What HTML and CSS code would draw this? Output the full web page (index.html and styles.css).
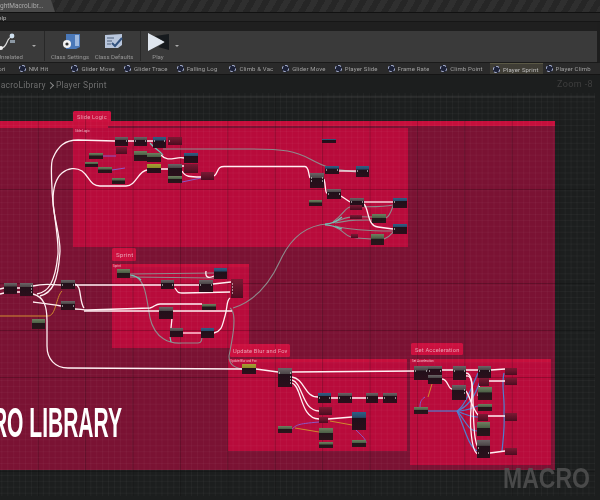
FILE: index.html
```html
<!DOCTYPE html>
<html lang="en">
<head>
<meta charset="utf-8">
<title>Player Sprint</title>
<link rel="stylesheet" href="styles.css">
</head>
<body>
<div class="app">
  <header class="titlebar"><div class="doctab">ghtMacroLibr...</div></header>
  <nav class="menubar"><span class="menu-item">Help</span></nav>
  <div class="toolbar">
    <div class="tool tool-first">
      <svg class="tool-icon" viewBox="0 0 24 20"><path class="ic-wire" d="M3 16C10 16 8 5 14 5"/><circle class="ic-dot" cx="14" cy="4" r="2.4"/><rect class="ic-box" x="12" y="8" width="5" height="3"/><circle class="ic-dot2" cx="3" cy="16" r="2"/></svg>
      <span class="tool-label">Unrelated</span>
    </div>
    <span class="caret caret-a"></span>
    <span class="sep"></span>
    <div class="tool">
      <svg class="tool-icon" viewBox="0 0 24 20"><path class="ic-blue" d="M8 2H22V15L18 17H8Z"/><path class="ic-light" d="M17 3H21V14H17Z"/><circle class="ic-gear" cx="9" cy="12" r="4"/><circle class="ic-hole" cx="9" cy="12" r="1.6"/></svg>
      <span class="tool-label">Class Settings</span>
    </div>
    <div class="tool">
      <svg class="tool-icon" viewBox="0 0 24 20"><path class="ic-pale" d="M3 3L20 2V13L16 16H3Z"/><path class="ic-check" d="M10 11L13 14L20 6"/><path class="ic-lines" d="M5 6H12M5 9H10M5 12H9"/></svg>
      <span class="tool-label">Class Defaults</span>
    </div>
    <span class="sep sep-b"></span>
    <div class="tool tool-play">
      <svg class="tool-icon" viewBox="0 0 24 20"><path class="ic-white" d="M2 1L19 10L2 19Z"/><path class="ic-dark" d="M19 10L9 4L23 2V18L12 15Z"/></svg>
      <span class="tool-label">Play</span>
    </div>
    <span class="caret caret-b"></span>
  </div>
  <div class="tabs">
    <div class="tab"><span class="tab-text">Anim Graph Cori</span></div>
    <div class="tab"><span class="gear"></span><span class="tab-text">NM Hit</span></div>
    <div class="tab"><span class="gear"></span><span class="tab-text">Glider Move</span></div>
    <div class="tab"><span class="gear"></span><span class="tab-text">Glider Trace</span></div>
    <div class="tab"><span class="gear"></span><span class="tab-text">Falling Log</span></div>
    <div class="tab"><span class="gear"></span><span class="tab-text">Climb &amp; Vac</span></div>
    <div class="tab"><span class="gear"></span><span class="tab-text">Glider Move</span></div>
    <div class="tab"><span class="gear"></span><span class="tab-text">Player Slide</span></div>
    <div class="tab"><span class="gear"></span><span class="tab-text">Frame Rate</span></div>
    <div class="tab"><span class="gear"></span><span class="tab-text">Climb Point</span></div>
    <div class="tab tab-active"><span class="gear"></span><span class="tab-text">Player Sprint</span></div>
    <div class="tab"><span class="gear"></span><span class="tab-text">Player Climb</span></div>
  </div>
  <main class="graph">
    <svg class="graph-svg" viewBox="0 74 600 426">
      <defs>
        <pattern id="minor" patternUnits="userSpaceOnUse" x="2.3" y="0.5" width="5.93" height="5.93"><path class="grid-minor" d="M5.93 0V5.93M0 5.93H5.93"/></pattern>
        <pattern id="major" patternUnits="userSpaceOnUse" x="37.7" y="47" width="47.4" height="47"><path class="grid-major" d="M0 0V47M0 0H47.4"/></pattern>
        <linearGradient id="nk" x1="0" y1="0" x2="0" y2="1"><stop offset="0" stop-color="#6b6567"/><stop offset=".3" stop-color="#4d4648"/><stop offset=".34" stop-color="#22101a"/><stop offset="1" stop-color="#2b0f1b"/></linearGradient>
        <linearGradient id="nb" x1="0" y1="0" x2="0" y2="1"><stop offset="0" stop-color="#2f5f86"/><stop offset=".3" stop-color="#294a68"/><stop offset=".34" stop-color="#20101a"/><stop offset="1" stop-color="#2a0f1b"/></linearGradient>
        <linearGradient id="ng" x1="0" y1="0" x2="0" y2="1"><stop offset="0" stop-color="#6f8060"/><stop offset=".4" stop-color="#4c5f46"/><stop offset=".44" stop-color="#22151a"/><stop offset="1" stop-color="#2b151b"/></linearGradient>
        <linearGradient id="ny" x1="0" y1="0" x2="0" y2="1"><stop offset="0" stop-color="#a8a032"/><stop offset=".4" stop-color="#8e8c2c"/><stop offset=".44" stop-color="#22101a"/><stop offset="1" stop-color="#2b0f1b"/></linearGradient>
        <linearGradient id="nr" x1="0" y1="0" x2="0" y2="1"><stop offset="0" stop-color="#7b1a34"/><stop offset="1" stop-color="#4c0c20"/></linearGradient>
      </defs>

      <rect class="bg" x="0" y="74" width="600" height="426"/>
      <rect class="outer" x="0" y="120" width="555" height="349"/>
      <rect class="outer-top" x="0" y="120" width="555" height="5"/>
      <rect class="inner" x="73" y="127" width="335" height="119"/>
      <rect class="inner-top" x="0" y="125" width="108" height="2"/>
      <rect class="inner" x="112" y="263" width="137" height="84"/>
      <rect class="inner" x="228" y="358" width="179" height="92"/>
      <rect class="inner" x="410" y="358" width="141" height="106"/>
      <rect class="inner-head" x="112" y="263" width="137" height="3"/>
      <rect class="inner-head" x="228" y="358" width="179" height="3"/>
      <rect class="inner-head" x="410" y="358" width="141" height="3"/>
      <rect class="label-bg" x="73" y="110" width="38" height="11" rx="1.5"/>
      <rect class="label-bg" x="112" y="247" width="24" height="13" rx="1.5"/>
      <rect class="label-bg" x="230" y="343" width="60" height="13" rx="1.5"/>
      <rect class="label-bg" x="411" y="342" width="52" height="12" rx="1.5"/>
      <rect fill="url(#minor)" x="0" y="92" width="595" height="403"/>
      <rect fill="url(#major)" x="0" y="92" width="595" height="403"/>
      <path class="frame" d="M0 96H595"/>

      <text class="label" x="77" y="118">Slide Logic</text>
      <text class="label label-lg" x="116" y="256">Sprint</text>
      <text class="label" x="233" y="352">Update Blur and Fov</text>
      <text class="label" x="415" y="351">Set Acceleration</text>
      <text class="tiny" x="75" y="131">Slide Logic</text>
      <text class="tiny" x="113" y="266">Sprint</text>
      <text class="tiny" x="230" y="361">Update Blur and Fov</text>
      <text class="tiny" x="412" y="361">Set Acceleration</text>

      <text class="macro-big" x="-56" y="436" textLength="178" lengthAdjust="spacingAndGlyphs">MACRO LIBRARY</text>
      <text class="macro-mark" x="503" y="487" textLength="87" lengthAdjust="spacingAndGlyphs">MACRO</text>

      <!-- wires: grey -->
      <g class="wire-grey">
        <path d="M163 148H250C285 148 295 150 310 158S330 168 356 171"/>
        <path d="M130 273L214 272"/>
        <path d="M130 276L214 277"/>
        <path d="M132 274C146 278 146 295 150 317C155 338 170 343 182 342H198C202 342 202 338 202 333"/>
        <path d="M230 307C238 312 232 340 229 355C229 362 232 366 242 368"/>
        <path d="M233 307C255 300 270 282 280 260C290 238 305 224 328 223"/>
        <path d="M333 221C345 212 345 207 350 206C360 205 380 207 393 204"/>
        <path d="M333 222C345 216 350 215 372 216"/>
        <path d="M335 222C350 219 355 219 372 219"/>
        <path d="M335 225C350 229 375 230 393 230"/>
        <path d="M333 225C345 230 345 235 351 236C360 238 365 237 371 238"/>
        <path d="M384 238C390 236 392 232 393 231"/>
        <path d="M386 217C390 215 392 208 393 205"/>
      </g>
      <path class="wire-teal" d="M325 223C332 223 336 221 342 216M325 224C332 224 336 226 342 228"/>
      <path class="wire-teal" d="M130 274C136 275 138 276 141 279M170 336L171 341M150 142C155 148 160 150 163 154"/>
      <!-- wires: orange, purple, blue -->
      <g class="wire-orange">
        <path d="M0 315H48C56 315 56 296 62 290"/>
        <path d="M330 420L352 424"/>
        <path d="M295 427L319 431"/>
        <path d="M428 396L432 383"/>
      </g>
      <g class="wire-purple">
        <path d="M292 428C297 424 296 423 319 421"/>
        <path d="M356 429C362 435 366 438 366 442"/>
        <path d="M112 169L125 167M103 155L116 155M182 181L201 177"/>
      </g>
      <g class="wire-blue">
        <path d="M428 410H457"/>
        <path d="M457 410C465 405 470 390 478 372"/>
        <path d="M457 410C468 406 475 396 480 380"/>
        <path d="M457 410C470 410 475 405 478 405"/>
        <path d="M457 410C468 415 472 416 478 416"/>
        <path d="M457 410C466 420 468 430 477 430"/>
        <path d="M457 410C464 425 468 445 477 450"/>
        <path d="M504 372C501 385 505 395 504 412"/>
        <path d="M504 412C505 425 503 440 502 450"/>
      </g>
      <path class="wire-purple" d="M420 406C420 400 422 398 425 396"/>

      <!-- wires: white -->
      <g class="wire-white">
        <path d="M37 293C48 291 55 283 58 253C59 235 52 205 52 187C51 170 51 160 53 157C58 145 65 139 78 139L115 140"/>
        <path d="M40 295C52 292 58 282 60 250C60 232 53 215 53 200C53 190 55 178 62 172C68 167 76 166 82 170C90 176 90 185 100 185H126C136 185 138 170 147 169"/>
        <path d="M128 140H134M147 140H153"/>
        <path d="M161 154C168 162 176 155 184 157"/>
        <path d="M161 168H168M182 170C185 176 190 176 201 176"/>
        <path d="M182 165H184"/>
        <path d="M214 175C219 172 216 165 225 165.500H305C309 166 308 172 310 177"/>
        <path d="M339 170H356"/>
        <path d="M324 178C326 185 325 192 327 192M341 195L350 201"/>
        <path d="M364 201H393"/>
        <path d="M364 203C369 208 367 225 378 226L393 228"/>
        <path d="M33 285C45 282 52 284 61 284"/>
        <path d="M0 288L4 287M0 293L4 292M17 287H20M17 291H20"/>
        <path d="M75 284H161M174 284H199M213 283L231 281"/>
        <path d="M175 287C178 292 178 292 184 292L230 291"/>
        <path d="M33 301C42 302 52 303 61 305"/>
        <path d="M75 283C82 285 79 300 84 307"/>
        <path d="M75 308C80 308 82 309 88 309L150 307C155 306 155 303 160 303H202"/>
        <path d="M84 310L232 310"/>
        <path d="M33 293C44 296 47 305 47 320V345C47 358 55 367 68 367L242 368"/>
        <path d="M172 317L171 327"/>
        <path class="wire-thick" d="M183 332H201"/>
        <path d="M214 332C222 330 222 325 225 315C228 305 226 300 230 297"/>
        <path d="M206 270C205 276 208 278 214 275"/>
        <path d="M256 368L278 371M292 371L415 370"/>
        <path d="M292 376C305 378 304 396 318 396"/>
        <path d="M292 379C303 382 302 410 319 410"/>
        <path d="M292 382C302 385 300 418 319 418"/>
        <path d="M331 397H338M352 397H366M378 397H383"/>
        <path d="M328 418L352 416"/>
        <path d="M428 369H478M491 369L505 368"/>
        <path d="M442 378C448 378 448 388 452 388"/>
        <path d="M466 372C475 372 472 400 474 425C475 445 478 450 486 452"/>
        <path d="M466 375C478 373 468 410 471 430C472 443 474 452 478 453"/>
        <path d="M491 372C478 372 480 385 478 395"/>
        <path d="M466 390C470 395 472 408 479 415"/>
        <path d="M489 380H505M488 415H505M490 452L505 450"/>
      </g>

      <!-- nodes -->
      <g fill="url(#nk)">
        <rect x="115" y="136" width="13" height="9"/><rect x="134" y="136" width="13" height="9"/>
        <rect x="168" y="163" width="14" height="12"/><rect x="310" y="172" width="14" height="15"/>
        <rect x="327" y="188" width="14" height="10"/><rect x="350" y="197" width="14" height="9"/>
        <rect x="4" y="282" width="13" height="11"/><rect x="20" y="282" width="13" height="13"/>
        <rect x="61" y="279" width="14" height="9"/><rect x="61" y="300" width="14" height="9"/>
        <rect x="161" y="279" width="13" height="9"/><rect x="199" y="279" width="14" height="12"/>
        <rect x="159" y="306" width="14" height="12"/><rect x="170" y="327" width="13" height="9"/>
        <rect x="278" y="367" width="14" height="19"/><rect x="338" y="392" width="14" height="10"/>
        <rect x="366" y="392" width="12" height="10"/><rect x="383" y="392" width="14" height="10"/>
        <rect x="414" y="365" width="14" height="14"/><rect x="428" y="365" width="14" height="9"/>
        <rect x="428" y="374" width="14" height="9"/><rect x="453" y="365" width="13" height="14"/>
        <rect x="452" y="384" width="14" height="15"/><rect x="478" y="365" width="13" height="12"/>
        <rect x="477" y="439" width="13" height="18"/>
      </g>
      <g fill="url(#nb)">
        <rect x="153" y="136" width="13" height="11"/><rect x="184" y="152" width="14" height="10"/>
        <rect x="322" y="138" width="14" height="4"/><rect x="325" y="165" width="14" height="8"/>
        <rect x="356" y="165" width="13" height="11"/><rect x="393" y="197" width="14" height="10"/>
        <rect x="393" y="223" width="14" height="10"/><rect x="214" y="267" width="13" height="11"/>
        <rect x="201" y="327" width="13" height="10"/><rect x="318" y="392" width="13" height="10"/>
        <rect x="352" y="411" width="14" height="18"/>
      </g>
      <g fill="url(#ng)">
        <rect x="134" y="150" width="13" height="10"/><rect x="147" y="152" width="14" height="9"/>
        <rect x="89" y="152" width="14" height="6"/><rect x="85" y="161" width="13" height="5"/>
        <rect x="98" y="166" width="14" height="6"/><rect x="112" y="177" width="13" height="6"/>
        <rect x="168" y="175" width="14" height="7"/><rect x="309" y="199" width="13" height="6"/>
        <rect x="372" y="213" width="14" height="9"/><rect x="371" y="233" width="13" height="11"/>
        <rect x="117" y="268" width="13" height="9"/><rect x="202" y="303" width="14" height="6"/>
        <rect x="32" y="318" width="13" height="10"/><rect x="278" y="425" width="14" height="7"/>
        <rect x="319" y="427" width="14" height="12"/><rect x="319" y="441" width="14" height="6"/>
        <rect x="352" y="439" width="14" height="7"/><rect x="478" y="386" width="14" height="13"/>
        <rect x="478" y="403" width="14" height="7"/><rect x="414" y="406" width="14" height="7"/>
        <rect x="477" y="421" width="13" height="14"/>
      </g>
      <g fill="url(#ny)">
        <rect x="147" y="163" width="14" height="9"/><rect x="242" y="363" width="14" height="10"/>
      </g>
      <g fill="url(#nr)">
        <rect x="168" y="136" width="14" height="8"/><rect x="116" y="146" width="11" height="7"/>
        <rect x="184" y="163" width="14" height="9"/><rect x="201" y="171" width="13" height="8"/>
        <rect x="231" y="278" width="12" height="19"/><rect x="319" y="406" width="13" height="8"/>
        <rect x="319" y="416" width="9" height="6"/><rect x="505" y="367" width="12" height="7"/>
        <rect x="479" y="377" width="10" height="8"/><rect x="505" y="377" width="12" height="7"/>
        <rect x="478" y="413" width="10" height="7"/><rect x="505" y="412" width="12" height="8"/>
        <rect x="505" y="447" width="12" height="7"/><rect x="351" y="233" width="7" height="4"/>
        <rect x="350" y="214" width="12" height="4"/><rect x="350" y="204" width="12" height="5"/>
      </g>
      <!-- pins -->
      <path class="pins" d="M126 140h1M135 140h1M145 140h1M154 140h1M164 140h1M169 140h1M326 169h1M337 169h1M357 170h1M367 170h1M311 177h1M322 177h1M311 180h1M322 180h1M328 193h1M339 193h1M351 201h1M362 201h1M394 201h1M394 228h1M62 284h1M73 284h1M31 285h1M31 288h1M31 291h1M62 305h1M73 305h1M162 284h1M172 284h1M200 284h1M211 284h1M232 283h1M232 286h1M232 289h1M232 292h1M279 372h1M290 372h1M290 376h1M290 379h1M290 382h1M319 397h1M329 397h1M339 397h1M350 397h1M367 397h1M384 397h1M395 397h1M415 370h1M426 370h1M429 370h1M440 370h1M454 370h1M464 370h1M479 370h1M489 370h1M464 389h1M464 392h1M478 452h1M488 452h1M478 447h1"/>
    </svg>
    <div class="crumbs"><span class="crumb">MacroLibrary</span><span class="chev"></span><span class="crumb">Player Sprint</span></div>
    <div class="zoom-read">Zoom -8</div>
  </main>
</div>
</body>
</html>
```
FILE: styles.css
```css
* { box-sizing: border-box; }
html, body { margin: 0; padding: 0; background: #111; }
body { width: 600px; height: 500px; overflow: hidden; font-family: Roboto, "Liberation Sans", sans-serif; }
.app { width: 600px; height: 500px; display: flex; flex-direction: column; overflow: hidden; filter: blur(0.5px); background: #1e1e1e; }

.titlebar { height: 13px; flex: none; background: repeating-linear-gradient(120deg, #262626 0 6px, #2f2f2f 6px 12px); border-bottom: 1px solid #111; }
.doctab { width: 55px; height: 12px; background: #4a4a4a; clip-path: polygon(0 0, 51px 0, 55px 12px, 0 12px); font-size: 6.5px; line-height: 12px; color: #aaa; white-space: nowrap; overflow: hidden; padding-left: 0; }

.menubar { height: 9px; flex: none; background: #262626; border-bottom: 1px solid #161616; display: flex; align-items: center; font-size: 6px; color: #b5b5b5; }
.menu-item { margin-left: -6px; }

.toolbar { height: 41px; flex: none; display: flex; align-items: flex-start; background: linear-gradient(#1f1f1f 0 9px, #3a3a3a 9px); padding-top: 9px; border-bottom: 1px solid #1a1a1a; border-right: 3px solid #1e1e1e; }
.tool { display: flex; flex-direction: column; align-items: center; width: 44px; height: 31px; color: #979797; font-size: 6px; white-space: nowrap; }
.tool-first { width: 32px; margin-left: -6px; }
.tool-icon { width: 24px; height: 20px; margin-top: 1px; }
.tool-label { margin-top: 1px; line-height: 7px; }
.tool-play { width: 34px; margin-left: 0; }
.caret { width: 0; height: 0; border-left: 2px solid transparent; border-right: 2px solid transparent; border-top: 2px solid #aaa; margin-top: 14px; }
.caret-a { margin-left: 6px; }
.caret-b { margin-left: 0; }
.sep { width: 1px; height: 30px; background: #282828; margin-left: 8px; margin-right: 3px; }
.sep-b { margin-left: 4px; margin-right: 0; }

.ic-wire { fill: none; stroke: #ddd; stroke-width: 1.2; }
.ic-dot { fill: #cfe0ef; }
.ic-dot2 { fill: #eee; }
.ic-box { fill: #8b97a3; }
.ic-blue { fill: #4a78b8; }
.ic-light { fill: #9db8de; }
.ic-gear { fill: #f2f2f2; }
.ic-hole { fill: #333; }
.ic-pale { fill: #b8c6dc; }
.ic-check { fill: none; stroke: #33537f; stroke-width: 2; }
.ic-lines { fill: none; stroke: #4c5e79; stroke-width: 1.2; }
.ic-white { fill: #dfe6ee; }
.ic-dark { fill: #161a1e; }

.tabs { height: 12px; flex: none; display: flex; margin-left: -37px; background: #2a2a2a; border-bottom: 1px solid #141414; }
.tab { width: 52.7px; flex: none; display: flex; align-items: center; gap: 2px; padding-left: 3px; overflow: hidden; white-space: nowrap; font-size: 6px; letter-spacing: 0.15px; color: #a0a0a0; }
.tab-active { background: #3f3d35; border-top: 1px solid #5a5845; color: #bcbcbc; }
.tab-text { overflow: hidden; min-width: 0; }
.tab:first-child { justify-content: flex-end; padding: 0 10px 0 0; }
.tab:first-child .tab-text { flex: none; }
.gear { width: 7px; height: 7px; flex: none; border-radius: 50%; border: 1.5px dashed #b4bde0; background: #1d2238; margin-right: 1px; }

.graph { flex: 1; position: relative; min-height: 0; }
.graph-svg { display: block; width: 600px; height: 426px; }
.crumbs { position: absolute; left: -7px; top: 5px; display: flex; align-items: center; gap: 2px; font-size: 8.5px; letter-spacing: 0.25px; color: #6e6e6e; }
.chev { width: 5px; height: 5px; border-top: 1px solid #8a8a8a; border-right: 1px solid #8a8a8a; transform: rotate(45deg); margin-right: 1px; }
.zoom-read { position: absolute; right: 7px; top: 4px; font-size: 9px; letter-spacing: 0.4px; color: #3e3e3e; }

.bg { fill: #1c1e1e; }
.outer { fill: #7a1233; }
.outer-top { fill: #c60f3c; }
.inner { fill: #b80b3b; }
.inner-top { fill: #c60f3c; }
.inner-head { fill: #c60f3c; }
.label-bg { fill: #cb0f3e; }
.label { font-family: Roboto, "Liberation Sans", sans-serif; font-size: 5.7px; letter-spacing: 0.2px; fill: #e8a0b2; }
.label-lg { font-size: 6.2px; }
.tiny { font-family: Roboto, "Liberation Sans", sans-serif; font-size: 3px; fill: #eebdca; }
.macro-big { font-family: "Liberation Sans Narrow", "Liberation Sans", sans-serif; font-weight: 700; font-size: 42px; fill: #fff; }
.macro-mark { font-family: "Liberation Sans", sans-serif; font-weight: 700; font-size: 30px; fill: #585858; fill-opacity: 0.75; }
.grid-minor { fill: none; stroke: #fff; stroke-opacity: 0.1; stroke-width: 0.6; }
.grid-major { fill: none; stroke: #000; stroke-opacity: 0.42; stroke-width: 1; }
.frame { stroke: #555; stroke-width: 0.8; stroke-opacity: .6; }

.wire-white { fill: none; stroke: #fff0f3; stroke-width: 1.3; }
.wire-thick { stroke: #f6a8bd; stroke-width: 1.8; }
.wire-grey { fill: none; stroke: #8e8a8c; stroke-width: 1.1; }
.wire-teal { fill: none; stroke: #6fc7b8; stroke-width: 1.2; }
.wire-orange { fill: none; stroke: #d08a2e; stroke-width: 1; }
.wire-purple { fill: none; stroke: #8a58c8; stroke-width: 1; }
.wire-blue { fill: none; stroke: #4f7fd0; stroke-width: 1.2; }
.pins { fill: none; stroke: #fff; stroke-width: 1; }
```
